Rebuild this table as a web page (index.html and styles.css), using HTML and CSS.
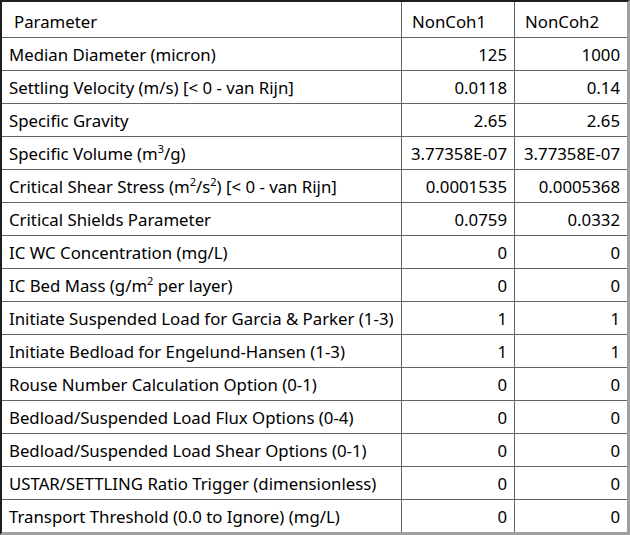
FILE: index.html
```html
<!DOCTYPE html>
<html>
<head>
<meta charset="utf-8">
<link rel="stylesheet" href="styles.css">
</head>
<body>
<div class="grid-frame">
<table class="grid">
<colgroup><col class="c-param"><col class="c-val"><col class="c-val2"></colgroup>
<thead>
<tr><th class="hdr-param">Parameter</th><th class="hdr">NonCoh1</th><th class="hdr">NonCoh2</th></tr>
</thead>
<tbody>
<tr><td>Median Diameter (micron)</td><td class="num">125</td><td class="num">1000</td></tr>
<tr><td>Settling Velocity (m/s) [&lt; 0 - van Rijn]</td><td class="num">0.0118</td><td class="num">0.14</td></tr>
<tr><td>Specific Gravity</td><td class="num">2.65</td><td class="num">2.65</td></tr>
<tr><td>Specific Volume (m<sup>3</sup>/g)</td><td class="num">3.77358E-07</td><td class="num">3.77358E-07</td></tr>
<tr><td>Critical Shear Stress (m<sup>2</sup>/s<sup>2</sup>) [&lt; 0 - van Rijn]</td><td class="num">0.0001535</td><td class="num">0.0005368</td></tr>
<tr><td>Critical Shields Parameter</td><td class="num">0.0759</td><td class="num">0.0332</td></tr>
<tr><td>IC WC Concentration (mg/L)</td><td class="num">0</td><td class="num">0</td></tr>
<tr><td>IC Bed Mass (g/m<sup>2</sup> per layer)</td><td class="num">0</td><td class="num">0</td></tr>
<tr><td>Initiate Suspended Load for Garcia &amp; Parker (1-3)</td><td class="num">1</td><td class="num">1</td></tr>
<tr><td>Initiate Bedload for Engelund-Hansen (1-3)</td><td class="num">1</td><td class="num">1</td></tr>
<tr><td>Rouse Number Calculation Option (0-1)</td><td class="num">0</td><td class="num">0</td></tr>
<tr><td>Bedload/Suspended Load Flux Options (0-4)</td><td class="num">0</td><td class="num">0</td></tr>
<tr><td>Bedload/Suspended Load Shear Options (0-1)</td><td class="num">0</td><td class="num">0</td></tr>
<tr><td>USTAR/SETTLING Ratio Trigger (dimensionless)</td><td class="num">0</td><td class="num">0</td></tr>
<tr><td>Transport Threshold (0.0 to Ignore) (mg/L)</td><td class="num">0</td><td class="num">0</td></tr>
</tbody>
</table>
</div>
</body>
</html>
```

FILE: styles.css
```css
html, body {
  margin: 0;
  padding: 0;
  background: #ffffff;
}
.grid-frame {
  width: 630px;
  height: 535px;
  box-sizing: border-box;
  border-top: 2px solid #1e1e1e;
  border-left: 2px solid #1e1e1e;
  border-right: 3px solid #a0a0a0;
  border-bottom: 3px solid #a0a0a0;
  overflow: hidden;
  background: #ffffff;
}
.grid {
  border-collapse: collapse;
  table-layout: fixed;
  width: 626px;
  margin-top: -1px;
  margin-left: -1px;
  font-family: "Noto Sans", "Open Sans", sans-serif;
  font-size: 16.8px;
  color: #000;
}
.c-param { width: 400px; }
.c-val { width: 113px; }
.c-val2 { width: 113px; }
.grid th, .grid td {
  border: 1px solid #646464;
  height: 33px;
  padding: 2px 7px 0 7px;
  box-sizing: border-box;
  white-space: nowrap;
  overflow: hidden;
  font-weight: normal;
  line-height: 20px;
}
.grid thead th {
  height: 36px;
  text-align: left;
  padding-left: 10px;
  padding-top: 4px;
}
.grid .hdr-param { padding-left: 12px; }
.grid td.num { text-align: right; padding-right: 7px; }
.grid td:first-child { padding-left: 7px; }
sup {
  font-size: 11px;
  line-height: 0;
  vertical-align: 7px;
}
```
